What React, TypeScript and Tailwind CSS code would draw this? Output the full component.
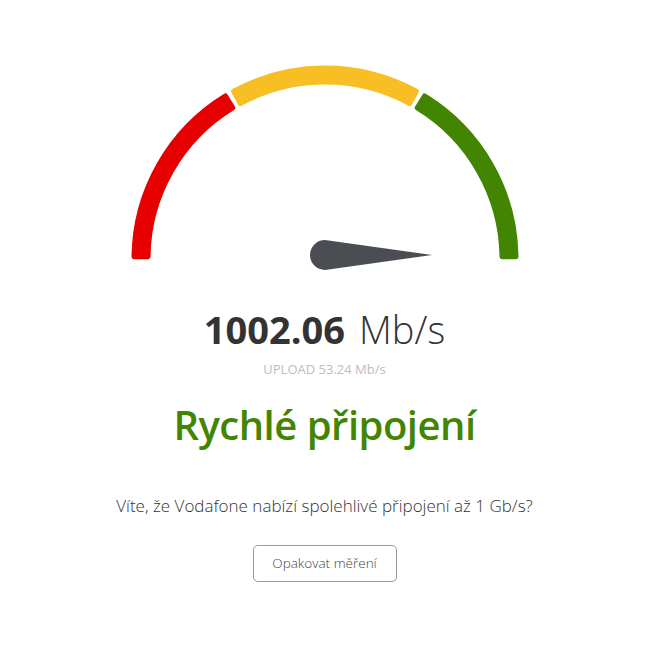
function arcPath(cx: number, cy: number, r1: number, r2: number, a1: number, a2: number) {
  // angles in degrees, 0 = right, counter-clockwise upward
  const p = (r: number, a: number) => {
    const t = (a * Math.PI) / 180
    return `${(cx + r * Math.cos(t)).toFixed(2)} ${(cy - r * Math.sin(t)).toFixed(2)}`
  }
  return `M ${p(r2, a1)} A ${r2} ${r2} 0 0 1 ${p(r2, a2)} L ${p(r1, a2)} A ${r1} ${r1} 0 0 0 ${p(r1, a1)} Z`
}

function Gauge() {
  const cx = 200
  const cy = 199
  // shrink by 2.5px, stroke of 5 gives round corners
  const r1 = 177
  const r2 = 191
  const segments = [
    { from: 179.3, to: 121.4, color: "#e60000" },
    { from: 118.6, to: 61.4, color: "#f8bf25" },
    { from: 58.6, to: 0.7, color: "#428500" },
  ]
  return (
    <svg width="400" height="215" viewBox="0 0 400 215">
      {segments.map((s) => (
        <path
          key={s.color}
          d={arcPath(cx, cy, r1, r2, s.from, s.to)}
          fill={s.color}
          stroke={s.color}
          strokeWidth="5"
          strokeLinejoin="round"
        />
      ))}
      {/* needle */}
      <path d="M 200 180 L 307 195 L 200 210 A 15 15 0 0 1 200 180 Z" fill="#4a4d52" />
    </svg>
  )
}

export default function App() {
  return (
    <div className="min-h-screen bg-white flex flex-col items-center pt-[60px] font-['Open_Sans',sans-serif]">
      <Gauge />

      <div className="mt-[32px] flex items-baseline gap-[14px] text-[#333] leading-[44px]">
        <span className="text-[38px] font-bold">1002.06</span>
        <span className="text-[38px] font-light">Mb/s</span>
      </div>

      <div className="mt-[10px] text-[13px] leading-[16px] text-[#bdbdbd]">
        UPLOAD 53.24 Mb/s
      </div>

      <h1 className="mt-[24px] text-[40px] leading-[48px] font-semibold text-[#428500] tracking-[-0.5px]">
        Rychlé připojení
      </h1>

      <p className="mt-[46px] text-[17px] leading-[22px] font-light text-[#333]">
        Víte, že Vodafone nabízí spolehlivé připojení až 1 Gb/s?
      </p>

      <button className="mt-[28px] w-[144px] h-[37px] rounded-[5px] border border-[#9a9a9a] text-[13.5px] font-light text-[#444] bg-white">
        Opakovat měření
      </button>
    </div>
  )
}
